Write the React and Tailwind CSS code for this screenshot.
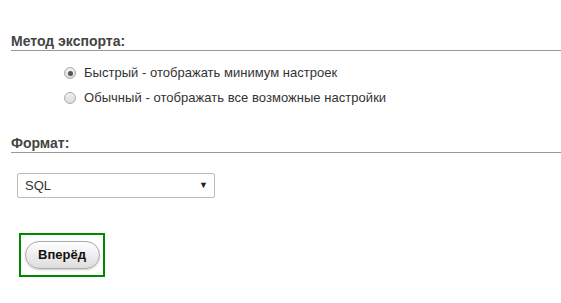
export default function App() {
  return (
    <div className="w-[561px] h-[303px] bg-white font-['Liberation_Sans',Arial,sans-serif] text-[#333] text-[13px] overflow-hidden">
      <div className="pl-[11px] pt-[33px]">
        <div className="text-[14px] font-bold text-[#444] leading-[16px] pb-[1px] border-b border-[#999]">Метод экспорта:</div>
        <div className="pl-[53px] pt-[14px] flex flex-col gap-[9px]">
          <label className="flex items-center gap-[8px] leading-[16px]">
            <span className="w-[12px] h-[12px] rounded-full border border-[#aaa] bg-gradient-to-b from-[#f0f0f0] to-[#dcdcdc] flex items-center justify-center">
              <span className="w-[5px] h-[5px] rounded-full bg-[#555]"></span>
            </span>
            <span className="tracking-[0.02px]">Быстрый - отображать минимум настроек</span>
          </label>
          <label className="flex items-center gap-[8px] leading-[16px]">
            <span className="w-[12px] h-[12px] rounded-full border border-[#aaa] bg-gradient-to-b from-[#f0f0f0] to-[#dcdcdc]"></span>
            <span className="tracking-[0.04px]">Обычный - отображать все возможные настройки</span>
          </label>
        </div>
        <div className="mt-[29px] text-[14px] font-bold text-[#444] leading-[16px] pb-[1px] border-b border-[#999]">Формат:</div>
        <div className="pl-[6px] pt-[20px]">
          <div className="w-[198px] h-[25px] border border-[#bbb] rounded-[2px] flex items-center justify-between pl-[7px] pr-[6px] bg-white">
            <span>SQL</span>
            <span className="text-[9px] text-[#222]">▼</span>
          </div>
        </div>
        <div className="pl-[8px] pt-[35px]">
          <div className="w-[86px] h-[44px] border-2 border-[#080] flex items-center justify-center">
            <button className="w-[75px] h-[28px] rounded-full border border-[#aaa] bg-gradient-to-b from-white to-[#ddd] font-bold text-[13px] text-[#111] shadow-[0_1px_2px_rgba(0,0,0,0.2)]">Вперёд</button>
          </div>
        </div>
      </div>
    </div>
  );
}
